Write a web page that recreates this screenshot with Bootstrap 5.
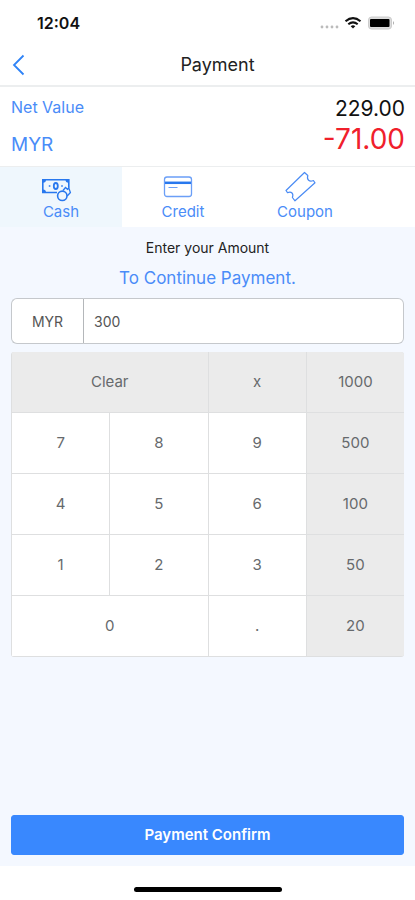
<!DOCTYPE html>
<html lang="en">
<head>
<meta charset="utf-8">
<meta name="viewport" content="width=device-width, initial-scale=1">
<title>Payment</title>
<link href="https://cdn.jsdelivr.net/npm/bootstrap@5.3.0/dist/css/bootstrap.min.css" rel="stylesheet">
<style>
body { font-family: Inter, "Liberation Sans", sans-serif; font-size: 14px; line-height: 20px; color: #222; background: #fff; }
.tint { color: #4a8cf8; }
.status-bar { height: 45px; padding: 0 20px 0 37px; font-size: 16px; color: #111; }
.title-bar { height: 42px; border-bottom: 2px solid #eceeef; padding: 0 12px; }
.title-bar h1 { font-size: 18px; line-height: 24px; }
.side-slot { width: 20px; }
.summary { height: 80px; border-bottom: 1px solid #eceeef; padding: 8px 10px 8px 11px; }
.net-label { font-size: 16px; line-height: 24px; }
.currency { font-size: 19px; line-height: 28px; }
.net-total { font-size: 21px; line-height: 28px; color: #111; }
.balance { font-size: 28px; line-height: 32px; color: #f0202b; }
.method { height: 60px; flex: 0 0 122px; border: 0; background: #fff; padding: 0 0 2px; font-size: 15px; line-height: 20px; }
.method.active { background: #eff7fd; }
.method svg { display: block; margin: 0 auto; }
.entry { background: #f4f8ff; padding: 11px; }
.prompt { font-size: 17px; line-height: 24px; }
.amount .input-group-text, .amount .form-control { height: 46px; font-size: 14px; color: #555; background: #fff; border-color: #c5c8cc; }
.amount .input-group-text { width: 74px; border-right: 2px solid #b4b7ba; }
.amount .form-control { border-left: 0; padding-left: 10px; }
.keypad { display: grid; grid-template-columns: repeat(4, 1fr); grid-auto-rows: 60px; gap: 1px; background: #dedfe0; border-radius: 3px; padding: 0 0 1px 1px; overflow: hidden; }
.keypad button { border: 0; background: #fff; color: #66696c; font-size: 15px; padding: 0; }
.keypad .alt { background: #ebebeb; }
.keypad .wide { grid-column: span 2; }
.confirm { height: 40px; background: #3988fe; border-color: #3988fe; border-radius: 3px; font-size: 15px; line-height: 20px; }
.home-zone { height: 34px; padding-top: 13px; }
.home-pill { width: 148px; height: 5px; border-radius: 3px; background: #000; }
</style>
</head>
<body class="d-flex flex-column min-vh-100">
<div class="status-bar d-flex align-items-center justify-content-between">
  <span class="fw-semibold">12:04</span>
  <svg width="75" height="16" viewBox="0 0 75 16" aria-hidden="true">
    <g fill="#bbb"><circle cx="2" cy="12" r="1.400"/><circle cx="7" cy="12" r="1.400"/><circle cx="12" cy="12" r="1.400"/><circle cx="17" cy="12" r="1.400"/></g>
    <g fill="none" stroke="#111" stroke-width="2.100"><path d="M25.500 6.300q7.500-6.300 15 0M28.300 9.300q4.700-3.900 9.400 0"/></g>
    <path d="M30.700 11.200q2.300-1.700 4.600 0L33 13.600z" fill="#111"/>
    <rect x="48.500" y="2" width="23" height="12" rx="3" fill="#ddd" stroke="#ccc"/>
    <rect x="50" y="4" width="19.500" height="8" rx="1" fill="#000"/>
    <path d="M73 6q2 2 0 4z" fill="#aaa"/>
  </svg>
</div>
<header class="title-bar d-flex align-items-center">
  <button type="button" class="btn p-0 border-0 side-slot d-flex" aria-label="Back">
    <svg width="14" height="22" viewBox="0 0 14 22" fill="none" stroke="#2f83f7" stroke-width="1.800"><path d="M11.500 1.500L2 11l9.500 9.500"/></svg>
  </button>
  <h1 class="m-0 fw-normal flex-grow-1 text-center">Payment</h1>
</header>
<section class="summary d-flex justify-content-between">
  <div class="tint">
    <div class="net-label">Net Value</div>
    <div class="currency mt-2 pt-1">MYR</div>
  </div>
  <div class="text-end">
    <div class="net-total">229.00</div>
    <div class="balance">-71.00</div>
  </div>
</section>
<nav class="d-flex" aria-label="Payment method">
  <button type="button" class="method active tint" aria-pressed="true">
    <svg width="40" height="31" viewBox="0 0 40 31" fill="none" stroke="#2878ee" stroke-width="1.600" aria-hidden="true">
      <path d="M16 21.500H1.800V8.800h26v8"/>
      <path d="M2 11.800q3 0 3-3H2zM27.500 11.800q-3 0-3-3h3zM2 18.500q3 0 3 3H2z" fill="#2878ee" stroke="none"/>
      <ellipse cx="14.800" cy="15" rx="2" ry="3" stroke-width="1.800"/>
      <path d="M7.800 15h1.600M20.200 15h1.600" stroke-width="1.500"/>
      <path d="M22 19.500l2.500-3 2 1.800 1.300-1.300 1.600 4.500-3.200 3.500" fill="#eff7fd" stroke-width="1.300"/>
      <circle cx="21.300" cy="24.800" r="4.700" fill="#eff7fd"/>
    </svg>
    Cash
  </button>
  <button type="button" class="method tint" aria-pressed="false">
    <svg width="40" height="31" viewBox="0 0 40 31" fill="none" stroke="#6b9ff7" stroke-width="1.300" aria-hidden="true">
      <rect x="1.500" y="6" width="27" height="19.500" rx="2.500"/><path d="M2 11.800h26" stroke="#2878ee" stroke-width="2.500"/><path d="M5.500 16.500h9" stroke-width="1"/>
    </svg>
    Credit
  </button>
  <button type="button" class="method tint" aria-pressed="false">
    <svg width="40" height="31" viewBox="0 0 40 31" fill="none" stroke="#4a8bf4" stroke-width="1.200" stroke-linejoin="round" aria-hidden="true">
      <path d="M19.500 1.500L1 19.500l1.500 2.200q3-1.200 4.500.3t.4 4.500l2.600 3.300L30 11.800l-1.600-2.300q-3 1.300-4.800-.2t-.8-4.800z"/>
    </svg>
    Coupon
  </button>
</nav>
<main class="entry flex-grow-1 d-flex flex-column">
  <label class="text-center" for="amount">Enter your Amount</label>
  <p class="prompt tint text-center mt-2 mb-2">To Continue Payment.</p>
  <div class="input-group amount mb-2">
    <span class="input-group-text justify-content-center">MYR</span>
    <input id="amount" class="form-control" type="text" inputmode="decimal" value="300">
  </div>
  <div class="keypad">
    <button type="button" class="alt wide">Clear</button><button type="button" class="alt">x</button><button type="button" class="alt">1000</button>
    <button type="button">7</button><button type="button">8</button><button type="button">9</button><button type="button" class="alt">500</button>
    <button type="button">4</button><button type="button">5</button><button type="button">6</button><button type="button" class="alt">100</button>
    <button type="button">1</button><button type="button">2</button><button type="button">3</button><button type="button" class="alt">50</button>
    <button type="button" class="wide">0</button><button type="button">.</button><button type="button" class="alt">20</button>
  </div>
  <button type="button" class="btn btn-primary confirm w-100 fw-semibold mt-auto">Payment Confirm</button>
</main>
<footer class="home-zone d-flex justify-content-center align-items-center"><div class="home-pill"></div></footer>
<script src="https://cdn.jsdelivr.net/npm/bootstrap@5.3.0/dist/js/bootstrap.bundle.min.js"></script>
</body>
</html>
